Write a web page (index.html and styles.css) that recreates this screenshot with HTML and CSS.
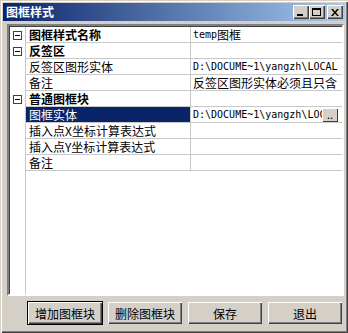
FILE: index.html
```html
<!DOCTYPE html>
<html lang="zh">
<head>
  <meta charset="UTF-8">
  <title>图框样式</title>
  <link rel="stylesheet" href="styles.css">
</head>
<body>
  <div class="window">
    <div class="titlebar">
      <span class="title">图框样式</span>
      <div class="caption-btns">
        <span class="cbtn"><i class="min"></i></span>
        <span class="cbtn"><i class="max"></i></span>
        <span class="cbtn close">
          <svg width="8" height="7" viewBox="0 0 8 7"><path d="M0 0h2l2 2.5 2-2.5h2l-3 3.5 3 3.5h-2l-2-2.5-2 2.5h-2l3-3.5z" fill="#000"/></svg>
        </span>
      </div>
    </div>

    <div class="grid">
      <div class="row cat">
        <div class="gut"><span class="tog"></span></div>
        <div class="name">图框样式名称</div>
        <div class="val"><span class="mono">temp</span>图框</div>
      </div>
      <div class="row cat">
        <div class="gut"><span class="tog"></span></div>
        <div class="name">反签区</div>
        <div class="val"></div>
      </div>
      <div class="row">
        <div class="gut"></div>
        <div class="name">反签区图形实体</div>
        <div class="val"><span class="mono">D:\DOCUME~1\yangzh\LOCAL</span></div>
      </div>
      <div class="row">
        <div class="gut"></div>
        <div class="name">备注</div>
        <div class="val">反签区图形实体必须且只含</div>
      </div>
      <div class="row cat">
        <div class="gut"><span class="tog"></span></div>
        <div class="name">普通图框块</div>
        <div class="val"></div>
      </div>
      <div class="row sel">
        <div class="gut"></div>
        <div class="name">图框实体</div>
        <div class="val"><span class="mono clip">D:\DOCUME~1\yangzh\LOC</span><span class="dots">..</span></div>
      </div>
      <div class="row">
        <div class="gut"></div>
        <div class="name">插入点X坐标计算表达式</div>
        <div class="val"></div>
      </div>
      <div class="row">
        <div class="gut"></div>
        <div class="name">插入点Y坐标计算表达式</div>
        <div class="val"></div>
      </div>
      <div class="row">
        <div class="gut"></div>
        <div class="name">备注</div>
        <div class="val"></div>
      </div>
      <div class="filler"></div>
    </div>

    <div class="buttons">
      <button class="btn">增加图框块</button>
      <button class="btn">删除图框块</button>
      <button class="btn">保存</button>
      <button class="btn">退出</button>
    </div>
  </div>
</body>
</html>
```

FILE: styles.css
```css
* {
  margin: 0;
  padding: 0;
  box-sizing: border-box;
}
body {
  background: #d4d0c8;
  font-family: "Noto Sans CJK SC", sans-serif;
  font-size: 12px;
  color: #000;
}
.window {
  width: 348px;
  height: 333px;
  padding: 3px;
  background: #d4d0c8;
  display: flex;
  flex-direction: column;
  box-shadow: inset 1px 1px 0 #d4d0c8, inset 2px 2px 0 #fff, inset -1px -1px 0 #404040, inset -2px -2px 0 #808080;
}

/* 标题栏 */
.titlebar {
  height: 18px;
  background: linear-gradient(to right, #0a246a, #a6caf0);
  display: flex;
  align-items: center;
  justify-content: space-between;
  padding: 0 2px 0 3px;
}
.title {
  color: #fff;
  font-weight: bold;
  font-size: 12px;
  line-height: 18px;
}
.caption-btns {
  display: flex;
}
.cbtn {
  width: 16px;
  height: 14px;
  background: #d4d0c8;
  display: flex;
  align-items: center;
  justify-content: center;
  box-shadow: inset 1px 1px 0 #fff, inset -1px -1px 0 #404040, inset -2px -2px 0 #808080;
}
.cbtn.close {
  margin-left: 2px;
}
.cbtn .min {
  width: 6px;
  height: 2px;
  background: #000;
  margin-top: 6px;
  margin-left: -2px;
}
.cbtn .max {
  width: 9px;
  height: 8px;
  border: 1px solid #000;
  border-top-width: 2px;
  margin-left: -1px;
}
.cbtn svg {
  margin-left: -1px;
}

/* 属性表 */
.grid {
  margin: 3px 1px 0 4px;
  height: 272px;
  background: #fff;
  border: 2px solid;
  border-color: #808080 #fff #fff #808080;
  box-shadow: inset 1px 1px 0 #404040;
  display: flex;
  flex-direction: column;
  padding-top: 1px;
}
.row {
  display: grid;
  grid-template-columns: 17px 165px 1fr;
  height: 16px;
  line-height: 15px;
  flex: none;
}
.gut {
  border-right: 1px solid #c8c8c8;
  display: flex;
  align-items: center;
  justify-content: center;
  padding-left: 1px;
}
.tog {
  width: 9px;
  height: 9px;
  border: 1px solid #404040;
  position: relative;
}
.tog::after {
  content: "";
  position: absolute;
  left: 1px;
  top: 3px;
  width: 5px;
  height: 1px;
  background: #000;
}
.name {
  border-right: 1px solid #c8c8c8;
  border-bottom: 1px solid #c8c8c8;
  padding-left: 3px;
  white-space: nowrap;
  overflow: hidden;
}
.val {
  border-bottom: 1px solid #c8c8c8;
  padding-left: 2px;
  white-space: nowrap;
  overflow: hidden;
  display: flex;
  align-items: center;
}
.cat .name {
  font-weight: bold;
}
.sel .name {
  background: #0a246a;
  color: #fff;
}
.mono {
  font-family: "DejaVu Sans Mono", monospace;
  font-size: 10px;
}
.mono.clip {
  width: 129px;
  overflow: hidden;
  flex: none;
}
.dots {
  width: 16px;
  height: 14px;
  margin-right: 3px;
  background: #d4d0c8;
  line-height: 12px;
  font-size: 11px;
  text-align: center;
  flex: none;
  box-shadow: inset 1px 1px 0 #fff, inset -1px -1px 0 #404040;
}
.filler {
  flex: 1;
  width: 17px;
  border-right: 1px solid #c8c8c8;
}

/* 底部按钮 */
.buttons {
  display: flex;
  justify-content: flex-end;
  gap: 6px;
  padding: 6px 3px 0 0;
}
.btn {
  width: 74px;
  height: 22px;
  background: #d4d0c8;
  border: none;
  font-family: "Noto Sans CJK SC", sans-serif;
  font-size: 12px;
  box-shadow: inset 1px 1px 0 #fff, inset -1px -1px 0 #404040, inset -2px -2px 0 #808080;
}
.btn:first-child {
  box-shadow: 0 0 0 1px #000, inset 1px 1px 0 #fff, inset -1px -1px 0 #404040, inset -2px -2px 0 #808080;
}
```
